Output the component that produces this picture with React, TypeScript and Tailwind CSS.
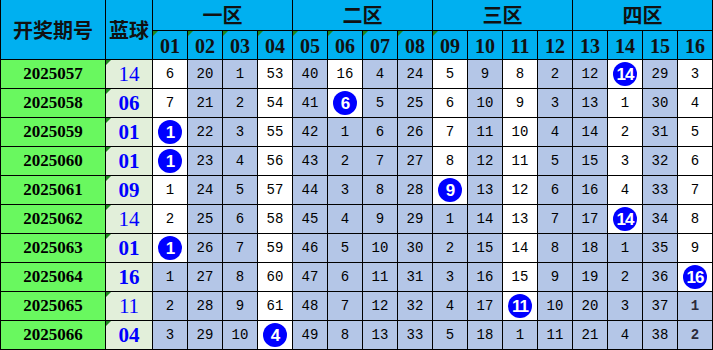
const rows: { period: string; blue: string; vals: (number | string)[] }[] = [
  { period: '2025057', blue: '14', vals: [6, 20, 1, 53, 40, 16, 4, 24, 5, 9, 8, 2, 12, 'B14', 29, 3] },
  { period: '2025058', blue: '06', vals: [7, 21, 2, 54, 41, 'B6', 5, 25, 6, 10, 9, 3, 13, 1, 30, 4] },
  { period: '2025059', blue: '01', vals: ['B1', 22, 3, 55, 42, 1, 6, 26, 7, 11, 10, 4, 14, 2, 31, 5] },
  { period: '2025060', blue: '01', vals: ['B1', 23, 4, 56, 43, 2, 7, 27, 8, 12, 11, 5, 15, 3, 32, 6] },
  { period: '2025061', blue: '09', vals: [1, 24, 5, 57, 44, 3, 8, 28, 'B9', 13, 12, 6, 16, 4, 33, 7] },
  { period: '2025062', blue: '14', vals: [2, 25, 6, 58, 45, 4, 9, 29, 1, 14, 13, 7, 17, 'B14', 34, 8] },
  { period: '2025063', blue: '01', vals: ['B1', 26, 7, 59, 46, 5, 10, 30, 2, 15, 14, 8, 18, 1, 35, 9] },
  { period: '2025064', blue: '16', vals: [1, 27, 8, 60, 47, 6, 11, 31, 3, 16, 15, 9, 19, 2, 36, 'B16'] },
  { period: '2025065', blue: '11', vals: [2, 28, 9, 61, 48, 7, 12, 32, 4, 17, 'B11', 10, 20, 3, 37, 1] },
  { period: '2025066', blue: '04', vals: [3, 29, 10, 'B4', 49, 8, 13, 33, 5, 18, 1, 11, 21, 4, 38, 2] },
];

// how many rows from the top each column stays white
const whiteUntil = [7, 0, 0, 10, 0, 2, 0, 0, 5, 0, 9, 0, 0, 6, 0, 8];
const zones = ['一区', '二区', '三区', '四区'];
const cjk = "font-['Noto_Sans_CJK_SC',sans-serif]";

function Tri() {
  return (
    <span className="absolute left-0 top-0 w-0 h-0 border-t-[5px] border-t-[#1f8a1f] border-r-[5px] border-r-transparent" />
  );
}

function Ball({ n }: { n: string }) {
  return (
    <span className="w-6 h-6 rounded-full bg-[#0000ff] text-white flex items-center justify-center font-['Liberation_Sans',sans-serif] font-bold text-[17px] tracking-[-1px] leading-none">
      {n}
    </span>
  );
}

export default function App() {
  return (
    <div className="w-[713px] h-[350px] bg-white">
      <div className="grid grid-cols-[104px_46px_repeat(16,34px)] grid-rows-[30px_28px_repeat(10,28px)] gap-px bg-black px-px pb-px">
        <div className={`row-span-2 bg-[#00b0f0] flex items-center justify-center text-[20px] font-semibold text-[#111] ${cjk}`}>
          开奖期号
        </div>
        <div className={`row-span-2 bg-[#00b0f0] flex items-center justify-center text-[20px] font-semibold text-[#111] ${cjk}`}>
          蓝球
        </div>
        {zones.map((z) => (
          <div key={z} className={`col-span-4 bg-[#00b0f0] flex items-center justify-center text-[20px] font-semibold text-[#111] ${cjk}`}>
            {z}
          </div>
        ))}
        {Array.from({ length: 16 }, (_, i) => (
          <div key={i} className="relative bg-[#00b0f0] flex items-center justify-center font-['Liberation_Serif',serif] font-bold text-[20px] text-[#111] pt-[2px]">
            {i < 9 && <Tri />}
            {String(i + 1).padStart(2, '0')}
          </div>
        ))}
        {rows.map((r, ri) => (
          <div key={r.period} className="contents">
            <div className="bg-[#69f85f] flex items-center justify-center font-['Liberation_Serif',serif] font-bold text-[17px] text-black">
              {r.period}
            </div>
            <div
              className={`relative bg-[#e2efda] flex items-center justify-center font-['Liberation_Serif',serif] text-[21px] text-[#0000ff] pt-[2px] ${
                r.blue === '14' || r.blue === '11' ? '' : 'font-bold'
              }`}
            >
              {ri !== 7 && <Tri />}
              {r.blue}
            </div>
            {r.vals.map((v, ci) => {
              const white = ri < whiteUntil[ci];
              const ball = typeof v === 'string';
              const odd = ci === 15 && ri > 7;
              return (
                <div
                  key={ci}
                  className={`flex items-center justify-center font-['Liberation_Mono',monospace] text-[14px] ${
                    odd ? 'font-bold text-[#2a2a3a]' : 'text-black'
                  } ${white ? 'bg-white' : 'bg-[#b4c6e7]'}`}
                >
                  {ball ? <Ball n={(v as string).slice(1)} /> : v}
                </div>
              );
            })}
          </div>
        ))}
      </div>
    </div>
  );
}
